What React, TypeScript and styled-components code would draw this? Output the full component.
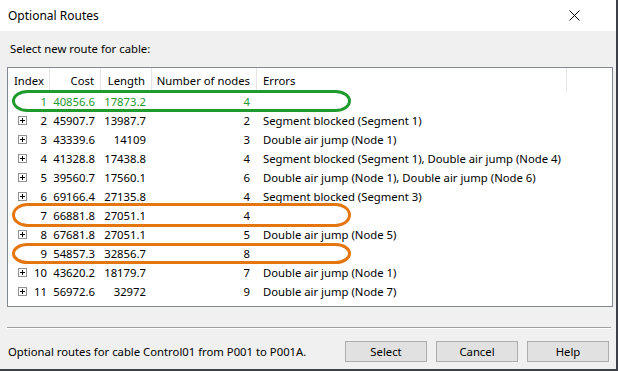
import React, { FC } from 'react';
import styled, { createGlobalStyle } from 'styled-components';

type Route = {
  index: number;
  cost: string;
  length: string;
  nodes: number;
  errors: string;
};

const routes: Route[] = [
  { index: 1, cost: '40856.6', length: '17873.2', nodes: 4, errors: '' },
  { index: 2, cost: '45907.7', length: '13987.7', nodes: 2, errors: 'Segment blocked (Segment 1)' },
  { index: 3, cost: '43339.6', length: '14109', nodes: 3, errors: 'Double air jump (Node 1)' },
  {
    index: 4,
    cost: '41328.8',
    length: '17438.8',
    nodes: 4,
    errors: 'Segment blocked (Segment 1), Double air jump (Node 4)',
  },
  {
    index: 5,
    cost: '39560.7',
    length: '17560.1',
    nodes: 6,
    errors: 'Double air jump (Node 1), Double air jump (Node 6)',
  },
  { index: 6, cost: '69166.4', length: '27135.8', nodes: 4, errors: 'Segment blocked (Segment 3)' },
  { index: 7, cost: '66881.8', length: '27051.1', nodes: 4, errors: '' },
  { index: 8, cost: '67681.8', length: '27051.1', nodes: 5, errors: 'Double air jump (Node 5)' },
  { index: 9, cost: '54857.3', length: '32856.7', nodes: 8, errors: '' },
  { index: 10, cost: '43620.2', length: '18179.7', nodes: 7, errors: 'Double air jump (Node 1)' },
  { index: 11, cost: '56972.6', length: '32972', nodes: 9, errors: 'Double air jump (Node 7)' },
];

const GlobalStyle = createGlobalStyle`
  html, body {
    margin: 0;
    padding: 0;
    background: #3d4046;
  }
  body {
    font-family: 'Segoe UI', 'Noto Sans', sans-serif;
    font-size: 11.3px;
    color: #000;
  }
`;

const App: FC = () => {
  return (
    <>
      <GlobalStyle />
      <Dialog>
        <TitleBar>
          <span>Optional Routes</span>
          <CloseIcon width="11" height="11" viewBox="0 0 11 11">
            <path d="M0.5 0.5 L10.5 10.5 M10.5 0.5 L0.5 10.5" stroke="#000" strokeWidth="1" />
          </CloseIcon>
        </TitleBar>
        <Body>
          <Prompt>Select new route for cable:</Prompt>
          <ListView>
            <HeaderRow>
              <HeaderCell>Index</HeaderCell>
              <HeaderCell $right>Cost</HeaderCell>
              <HeaderCell $right>Length</HeaderCell>
              <HeaderCell $right>Number of nodes</HeaderCell>
              <HeaderCell>Errors</HeaderCell>
              <HeaderCell $last />
            </HeaderRow>
            {routes.map(r => (
              <Row key={r.index} $best={r.index === 1}>
                <IndexCell>
                  {r.errors && (
                    <Expander width="9" height="9" viewBox="0 0 9 9">
                      <rect x="0.5" y="0.5" width="8" height="8" fill="#fff" stroke="#919191" />
                      <path d="M2 4.5 H7 M4.5 2 V7" stroke="#000" strokeWidth="1" />
                    </Expander>
                  )}
                  <span>{r.index}</span>
                </IndexCell>
                <Cell $right>{r.cost}</Cell>
                <Cell $right>{r.length}</Cell>
                <Cell $right $pad={7}>
                  {r.nodes}
                </Cell>
                <Cell>{r.errors}</Cell>
              </Row>
            ))}
            <Marks width="604" height="238" viewBox="0 0 604 238">
              <rect x="5.5" y="23.5" width="336" height="19" rx="14" ry="9.5" fill="none" stroke="#1f9a2c" strokeWidth="3" />
              <rect x="5.5" y="136.5" width="336" height="21" rx="14" ry="10.5" fill="none" stroke="#e5760f" strokeWidth="3" />
              <rect x="5.5" y="176.5" width="336" height="18" rx="14" ry="9" fill="none" stroke="#e5760f" strokeWidth="3" />
            </Marks>
          </ListView>
          <Separator />
          <Footer>
            <Status>Optional routes for cable Control01 from P001 to P001A.</Status>
            <Button>Select</Button>
            <Button>Cancel</Button>
            <Button>Help</Button>
          </Footer>
        </Body>
      </Dialog>
    </>
  );
};

export default App;

const Dialog = styled.div`
  width: 616px;
  height: 369px;
  background: #f0f0f0;
  display: flex;
  flex-direction: column;
`;

const TitleBar = styled.div`
  height: 31px;
  flex: none;
  background: #fff;
  display: flex;
  align-items: center;
  justify-content: space-between;
  padding: 0 36px 0 8px;
  box-sizing: border-box;
  font-size: 12px;
`;

const CloseIcon = styled.svg`
  display: block;
  margin-top: -1px;
`;

const Body = styled.div`
  flex: 1;
  display: flex;
  flex-direction: column;
  padding: 0 3px 0 7px;
`;

const Prompt = styled.div`
  height: 36px;
  line-height: 16px;
  padding: 10px 0 0 3px;
  box-sizing: border-box;
`;

const ListView = styled.div`
  position: relative;
  width: 606px;
  height: 240px;
  box-sizing: border-box;
  border: 1px solid #828790;
  background: #fff;
  overflow: hidden;
`;

const columns = '42px 51px 51px 105px 310px 1fr';

const HeaderRow = styled.div`
  display: grid;
  grid-template-columns: ${columns};
  height: 24px;
`;

const HeaderCell = styled.div<{ $right?: boolean; $last?: boolean }>`
  display: flex;
  align-items: center;
  justify-content: ${({ $right }) => ($right ? 'flex-end' : 'flex-start')};
  padding: 0 6px;
  border-right: ${({ $last }) => ($last ? 'none' : '1px solid #e5e5e5')};
  white-space: nowrap;
`;

const Row = styled.div<{ $best?: boolean }>`
  display: grid;
  grid-template-columns: ${columns};
  height: 19px;
  align-items: center;
  color: ${({ $best }) => ($best ? '#22992f' : '#000')};
`;

const Cell = styled.div<{ $right?: boolean; $pad?: number }>`
  display: flex;
  justify-content: ${({ $right }) => ($right ? 'flex-end' : 'flex-start')};
  padding: ${({ $pad }) => `0 ${$pad ?? 6}px`};
  white-space: nowrap;
  min-width: 0;
`;

const IndexCell = styled.div`
  display: flex;
  align-items: center;
  padding: 0 3px 0 10px;

  span {
    margin-left: auto;
  }
`;

const Expander = styled.svg`
  display: block;
`;

const Marks = styled.svg`
  position: absolute;
  left: 0;
  top: 0;
  pointer-events: none;
`;

const Separator = styled.div`
  width: 604px;
  margin-top: 20px;
  border-top: 1px solid #a0a0a0;
  border-bottom: 1px solid #fff;
`;

const Footer = styled.div`
  display: flex;
  align-items: center;
  gap: 9px;
  padding: 12px 4px 0 1px;
`;

const Status = styled.div`
  flex: 1;
`;

const Button = styled.button`
  width: 82px;
  height: 21px;
  padding: 0;
  font: inherit;
  color: #000;
  background: #e1e1e1;
  border: 1px solid #adadad;
`;
